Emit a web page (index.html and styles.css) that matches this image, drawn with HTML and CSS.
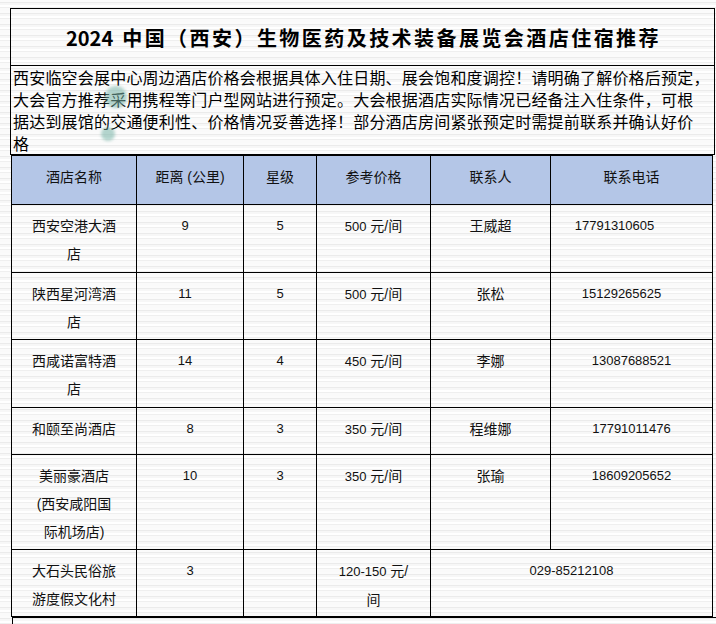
FILE: index.html
```html
<!DOCTYPE html>
<html lang="zh-CN">
<head>
<meta charset="utf-8">
<title>酒店住宿推荐</title>
<link rel="stylesheet" href="styles.css">
</head>
<body>
<div class="page">
  <div class="intro">
    <div class="title"><span class="year">2024</span>中国（西安）生物医药及技术装备展览会酒店住宿推荐</div>
    <div class="notice">西安临空会展中心周边酒店价格会根据具体入住日期、展会饱和度调控！请明确了解价格后预定，<br>大会官方推荐采用携程等门户型网站进行预定。大会根据酒店实际情况已经备注入住条件，可根<br>据达到展馆的交通便利性、价格情况妥善选择！部分酒店房间紧张预定时需提前联系并确认好价<br>格</div>
  </div>
  <table class="hotels">
    <colgroup>
      <col class="c-name"><col class="c-dist"><col class="c-star"><col class="c-price"><col class="c-contact"><col class="c-phone">
    </colgroup>
    <thead>
      <tr class="h-head">
        <th>酒店名称</th><th>距离 (公里)</th><th>星级</th><th>参考价格</th><th>联系人</th><th>联系电话</th>
      </tr>
    </thead>
    <tbody>
      <tr class="h-68">
        <td class="name">西安空港大酒店</td><td class="num dist">9</td><td class="num">5</td><td><span class="num">500</span> 元/间</td><td>王威超</td><td class="num shift-a">17791310605</td>
      </tr>
      <tr class="h-67">
        <td class="name">陕西星河湾酒店</td><td class="num dist">11</td><td class="num">5</td><td><span class="num">500</span> 元/间</td><td>张松</td><td class="num shift-b">15129265625</td>
      </tr>
      <tr class="h-68">
        <td class="name">西咸诺富特酒店</td><td class="num dist">14</td><td class="num">4</td><td><span class="num">450</span> 元/间</td><td>李娜</td><td class="num">13087688521</td>
      </tr>
      <tr class="h-47">
        <td class="name">和颐至尚酒店</td><td class="num">8</td><td class="num">3</td><td><span class="num">350</span> 元/间</td><td>程维娜</td><td class="num">17791011476</td>
      </tr>
      <tr class="h-95">
        <td class="name">美丽豪酒店<br>(西安咸阳国际机场店)</td><td class="num">10</td><td class="num">3</td><td><span class="num">350</span> 元/间</td><td>张瑜</td><td class="num">18609205652</td>
      </tr>
      <tr class="h-67">
        <td class="name">大石头民俗旅游度假文化村</td><td class="num">3</td><td></td><td><span class="num">120-150</span> 元/<br>间</td><td colspan="2" class="num">029-85212108</td>
      </tr>
    </tbody>
  </table>
  <div class="tail"></div>
  <div class="blob blob-a"></div>
  <div class="blob blob-b"></div>
</div>
</body>
</html>
```

FILE: styles.css
```css
html, body {
  margin: 0;
  padding: 0;
}
body {
  width: 716px;
  height: 624px;
  overflow: hidden;
  color: #111;
  font-family: "Liberation Sans", "Noto Sans CJK SC", sans-serif;
  background-color: #f5f5f5;
  background-image:
    repeating-linear-gradient(180deg,
      #fbfbfb 0px, #fbfbfb 2px,
      #ebebeb 2px, #ebebeb 3px,
      #f7f7f7 3px, #f7f7f7 5px,
      #ffffff 5px, #ffffff 7px,
      #efefef 7px, #efefef 8px,
      #fafafa 8px, #fafafa 11px);
}
.page {
  position: relative;
  padding-top: 8px;
}
.intro {
  margin-left: 10px;
  width: 703px;
  border: 1px solid #000;
}
.title {
  height: 56px;
  display: flex;
  align-items: center;
  justify-content: center;
  font-family: "Noto Sans CJK SC", sans-serif;
  font-weight: 700;
  font-size: 20px;
  letter-spacing: 2.45px;
  border-bottom: 1px solid #000;
  padding-left: 2px;
  color: #000;
}
.year {
  letter-spacing: 0;
  margin-right: 9px;
}
.notice {
  height: 88px;
  padding-left: 2px;
  font-family: "Noto Sans CJK SC", serif;
  font-size: 16px;
  line-height: 22px;
  letter-spacing: 0.2px;
  white-space: nowrap;
  overflow: hidden;
  color: #000;
}
.hotels {
  margin-left: 11px;
  width: 701px;
  table-layout: fixed;
  border-collapse: collapse;
  font-size: 14px;
  line-height: 28px;
}
.c-name { width: 125px; }
.c-dist { width: 107px; }
.c-star { width: 73px; }
.c-price { width: 114px; }
.c-contact { width: 120px; }
.c-phone { width: 162px; }
.hotels th,
.hotels td {
  border: 1px solid #000;
  text-align: center;
  vertical-align: top;
  padding: 7px 0 0;
  font-weight: 400;
}
.hotels th {
  background: #b4c6e7;
}
.hotels td.name {
  padding-left: 19px;
  padding-right: 19px;
}
.num {
  font-size: 13px;
}
.hotels td.dist { padding-right: 10px; }
.shift-a { padding-right: 34px !important; }
.shift-b { padding-right: 20px !important; }
.h-head { height: 49px; }
.h-68 { height: 68px; }
.h-67 { height: 67px; }
.h-47 { height: 47px; }
.h-95 { height: 95px; }
.tail {
  margin-left: 12px;
  height: 20px;
  border-left: 1px solid #000;
  border-top: 1px solid #000;
}
.blob {
  position: absolute;
  border-radius: 50%;
  background: rgba(120, 180, 168, 0.55);
  filter: blur(1.5px);
}
.blob-a {
  left: 105px;
  top: 86px;
  width: 22px;
  height: 22px;
}
.blob-b {
  left: 101px;
  top: 127px;
  width: 14px;
  height: 14px;
}
```
